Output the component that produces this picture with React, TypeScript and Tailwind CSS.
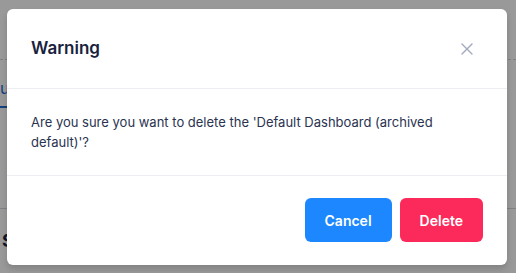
import { X } from "lucide-react";

export default function App() {
  return (
    <div className="relative w-[516px] h-[273px] overflow-hidden bg-white font-['Inter',sans-serif]">
      {/* Page underneath the dialog */}
      <div className="h-[60px] border-b border-dashed border-gray-300" />
      <div className="flex h-[48px] items-end">
        <div className="border-b-2 border-[#1d6fd6] pb-[6px] pr-4 text-[16px] text-[#1d6fd6]">
          u
        </div>
      </div>
      <div className="mt-[100px] border-t border-gray-300 pt-[18px]">
        <div className="ml-[2px] text-[18px] font-bold text-[#1b2540]">Settings</div>
      </div>

      {/* Dialog */}
      <div className="absolute inset-0 flex items-start bg-black/40 pl-[7px] pt-[9px]">
        <div className="w-[500px] rounded-md bg-white shadow-[0_4px_6px_rgba(0,0,0,0.15)]">
          <div className="flex h-[80px] items-center justify-between border-b border-[#eceef2] px-6">
            <h2 className="text-[17px] font-semibold text-[#19223d]">Warning</h2>
            <button className="mr-[6px] text-[#a3a9bf]">
              <X size={20} strokeWidth={1.6} />
            </button>
          </div>
          <div className="border-b border-[#eceef2] px-6 py-[23px]">
            <p className="text-[13px] leading-5 text-[#2a3350]">
              Are you sure you want to delete the 'Default Dashboard (archived default)'?
            </p>
          </div>
          <div className="flex justify-end gap-2 px-6 pt-[22px] pb-[23px]">
            <button className="h-11 rounded-md bg-[#1c87ff] px-5 text-[14px] font-semibold text-white">
              Cancel
            </button>
            <button className="h-11 rounded-md bg-[#fb2a5b] px-5 text-[14px] font-semibold text-white">
              Delete
            </button>
          </div>
        </div>
      </div>
    </div>
  );
}
